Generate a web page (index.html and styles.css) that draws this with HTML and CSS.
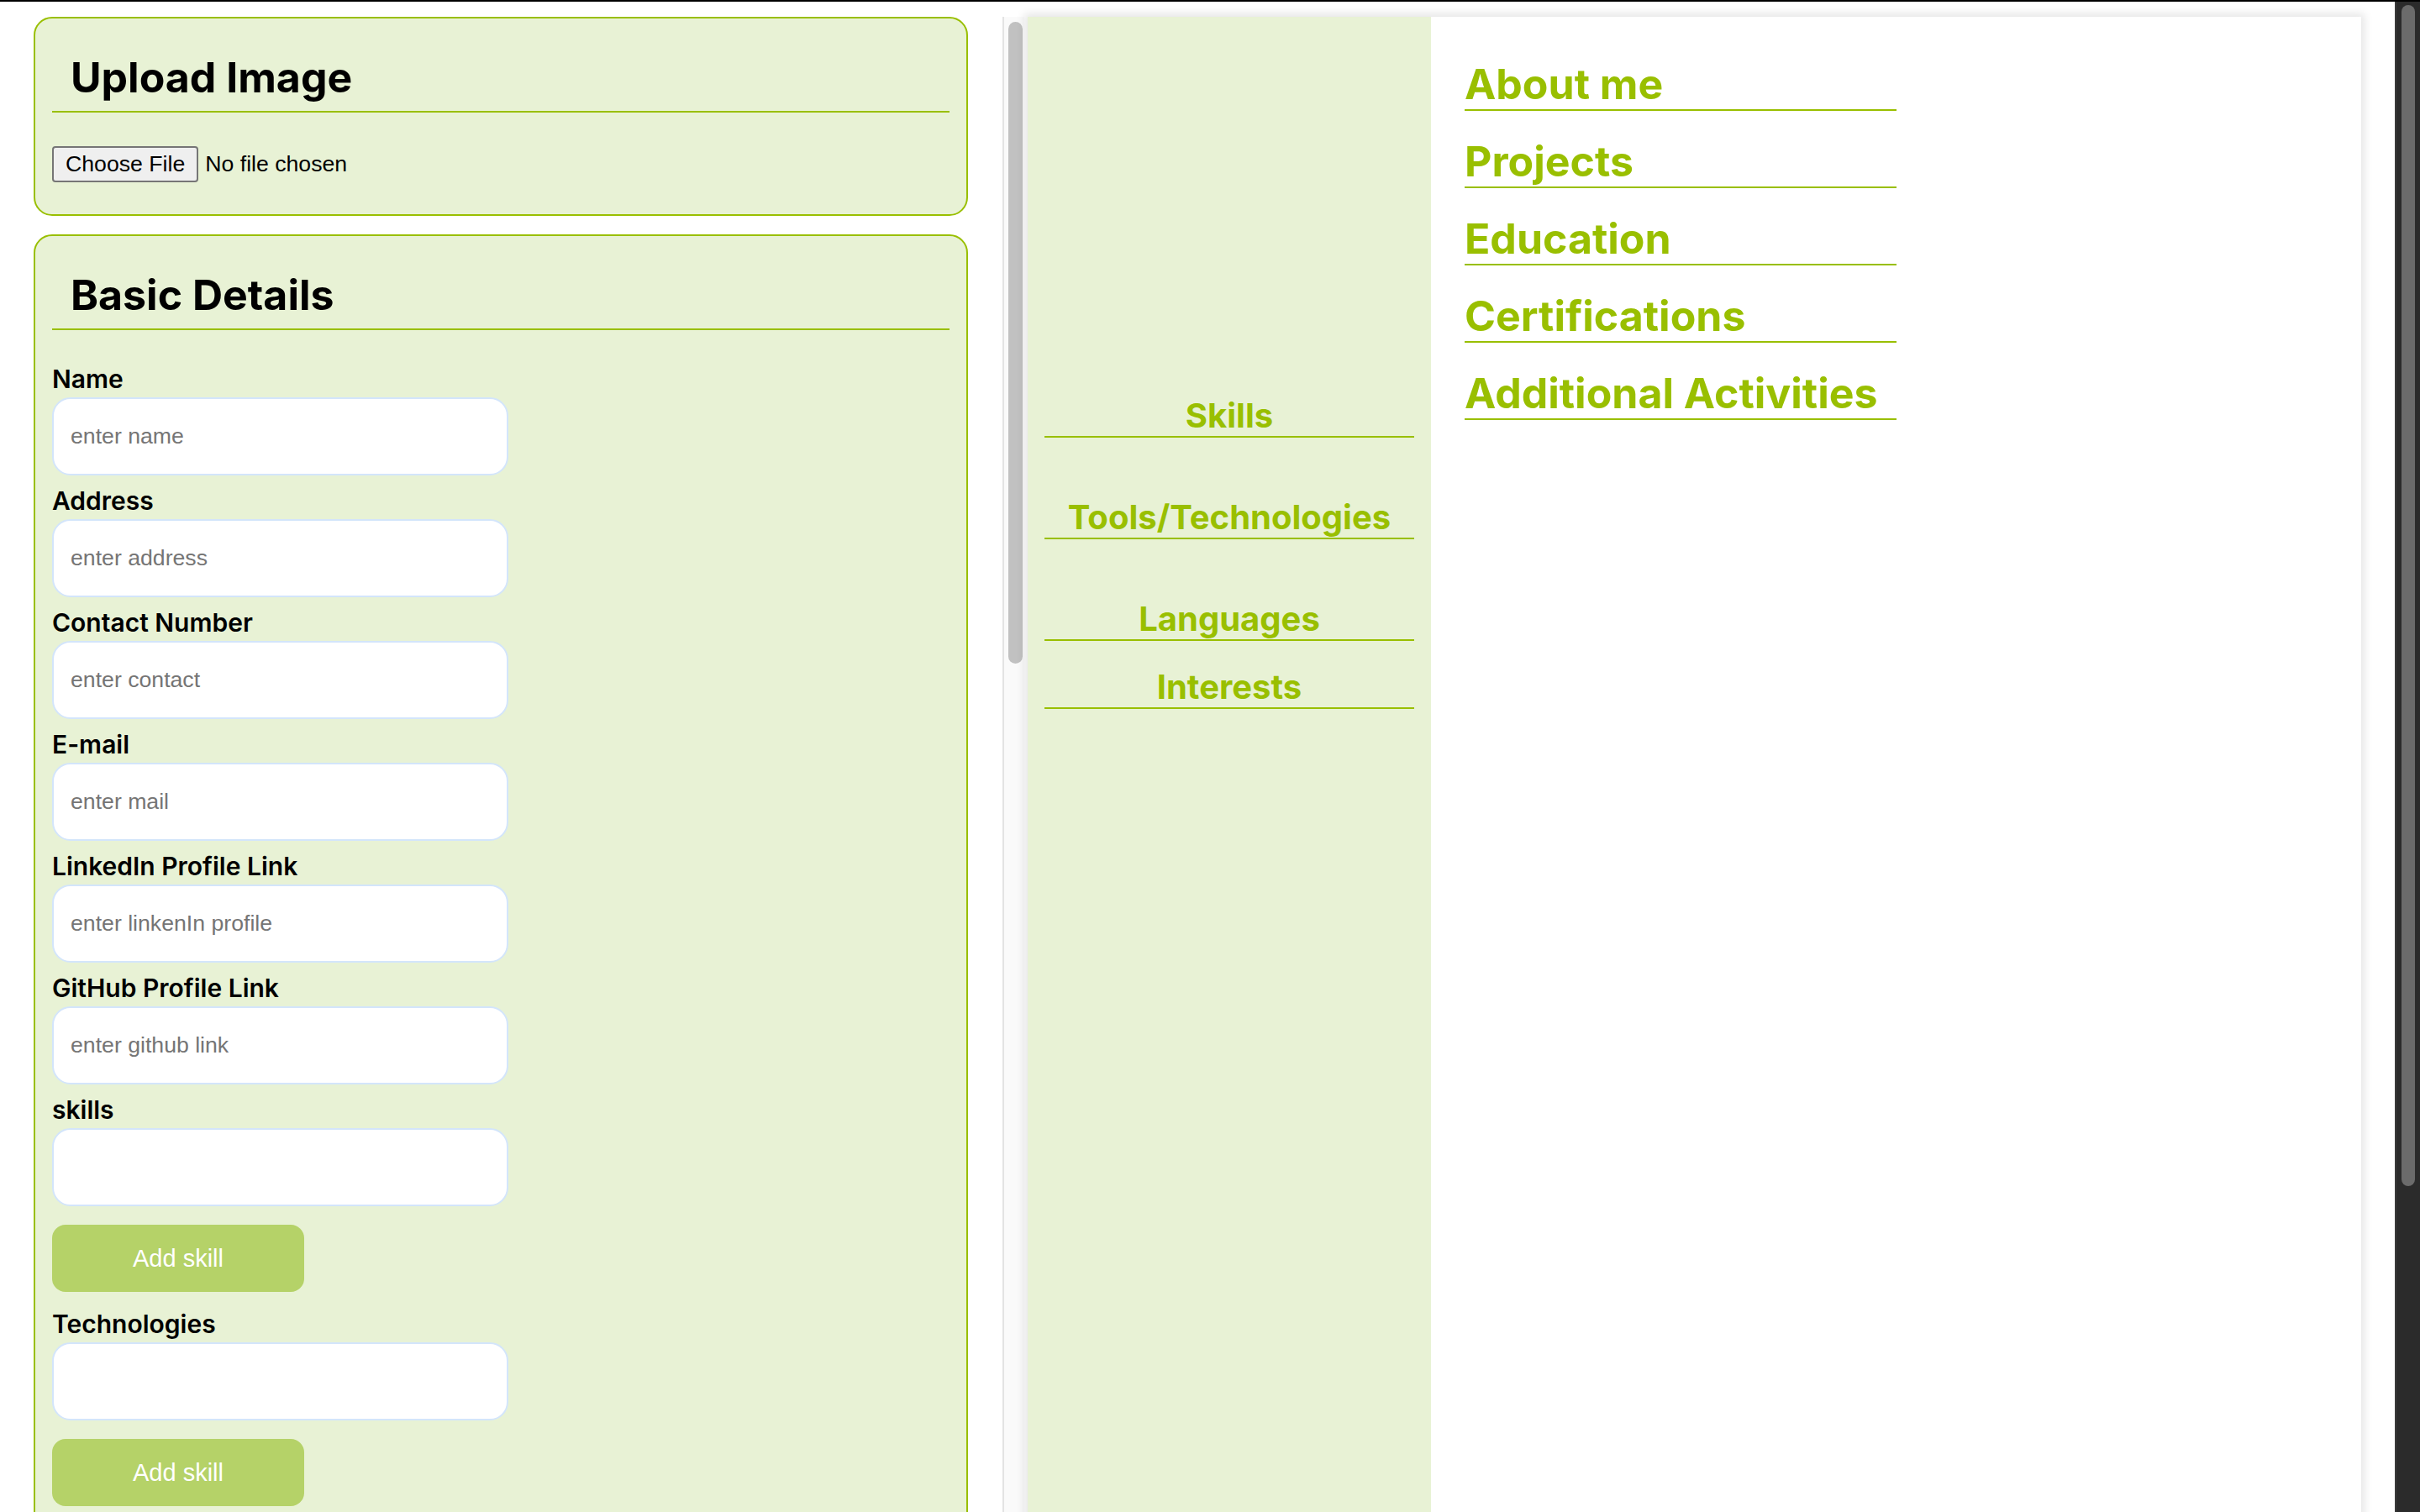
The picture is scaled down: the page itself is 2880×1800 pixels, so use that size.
FILE: index.html
```html
<!DOCTYPE html>
<html lang="en">
<head>
  <meta charset="UTF-8" />
  <meta name="viewport" content="width=device-width, initial-scale=1.0"/>
  <title>Resume Builder</title>
  <link rel="stylesheet" href="styles.css">
</head>
<body>
  <div class="page">
    <div class="form-panel">
      <div class="card">
        <h2>Upload Image</h2>
        <div class="file-row">
          <input type="file" id="imageInput" accept="image/*">
        </div>
      </div>

      <div class="card">
        <h2>Basic Details</h2>
        <label for="name">Name</label>
        <input class="field" type="text" id="name" placeholder="enter name">
        <label for="address">Address</label>
        <input class="field" type="text" id="address" placeholder="enter address">
        <label for="contact">Contact Number</label>
        <input class="field" type="text" id="contact" placeholder="enter contact">
        <label for="mail">E-mail</label>
        <input class="field" type="text" id="mail" placeholder="enter mail">
        <label for="linkedin">LinkedIn Profile Link</label>
        <input class="field" type="text" id="linkedin" placeholder="enter linkenIn profile">
        <label for="github">GitHub Profile Link</label>
        <input class="field" type="text" id="github" placeholder="enter github link">
        <label for="skillInput">skills</label>
        <input class="field" type="text" id="skillInput">
        <button class="add-btn" id="addSkillBtn">Add skill</button>
        <label for="techInput">Technologies</label>
        <input class="field" type="text" id="techInput">
        <button class="add-btn" id="addTechBtn">Add skill</button>
        <label for="langInput">Languages</label>
        <input class="field" type="text" id="langInput">
        <button class="add-btn">Add language</button>
        <label for="interestInput">Interests</label>
        <input class="field" type="text" id="interestInput">
        <button class="add-btn">Add interest</button>
      </div>

      <div class="card">
        <h2>Education</h2>
        <label for="degree">Degree</label>
        <input class="field" type="text" id="degree" placeholder="enter degree">
        <label for="college">Institute</label>
        <input class="field" type="text" id="college" placeholder="enter institute">
        <label for="year">Year</label>
        <input class="field" type="text" id="year" placeholder="enter year">
        <button class="add-btn">Add education</button>
      </div>

      <div class="card">
        <h2>Projects</h2>
        <label for="projTitle">Project Title</label>
        <input class="field" type="text" id="projTitle" placeholder="enter title">
        <label for="projDesc">Description</label>
        <input class="field" type="text" id="projDesc" placeholder="enter description">
        <button class="add-btn">Add project</button>
      </div>

      <div class="card">
        <h2>Certifications</h2>
        <label for="cert">Certificate</label>
        <input class="field" type="text" id="cert" placeholder="enter certificate">
        <button class="add-btn">Add certificate</button>
      </div>
    </div>

    <!-- panel scrollbar, drawn so it shows in screenshots -->
    <div class="panel-track" aria-hidden="true">
      <div class="panel-thumb"></div>
    </div>

    <div class="resume">
      <div class="side">
        <div class="photo" id="photoBox"></div>
        <h3>Skills</h3>
        <ul class="side-list" id="skillsList"></ul>
        <h3>Tools/Technologies</h3>
        <ul class="side-list" id="techList"></ul>
        <h3>Languages</h3>
        <h3>Interests</h3>
      </div>
      <div class="main">
        <h2>About me</h2>
        <h2>Projects</h2>
        <h2>Education</h2>
        <h2>Certifications</h2>
        <h2>Additional Activities</h2>
      </div>
    </div>
  </div>

  <div class="page-track" aria-hidden="true">
    <div class="page-thumb"></div>
  </div>

  <script>
    function addItem(inputId, listId) {
      const input = document.getElementById(inputId);
      if (!input.value.trim()) return;
      const li = document.createElement('li');
      li.textContent = input.value;
      document.getElementById(listId).appendChild(li);
      input.value = '';
    }

    document.getElementById('addSkillBtn').addEventListener('click', () => addItem('skillInput', 'skillsList'));
    document.getElementById('addTechBtn').addEventListener('click', () => addItem('techInput', 'techList'));
  </script>
</body>
</html>
```

FILE: styles.css
```css
* {
  box-sizing: border-box;
}

body {
  margin: 0;
  border-top: 2px solid #000;
  font-family: 'Inter', 'Noto Sans', sans-serif;
  background: #fff;
  color: #000;
}

.page {
  display: flex;
  align-items: flex-start;
  padding: 18px 0 20px;
}

.form-panel {
  width: 1193px;
  flex-shrink: 0;
  height: calc(100vh - 20px);
  overflow-y: auto;
  scrollbar-width: none;
  padding: 0 41px 0 40px;
}

.panel-track {
  width: 26px;
  flex-shrink: 0;
  height: calc(100vh - 20px);
  background: #fafafa;
  border-left: 2px solid #e3e3e3;
  padding: 6px 2px 0 5px;
}

.panel-thumb {
  height: 764px;
  background: #c1c1c1;
  border-radius: 9px;
}

.page-track {
  position: fixed;
  top: 2px;
  right: 0;
  width: 30px;
  height: 100vh;
  background: #2b2b2b;
  border-left: 2px solid #3a3a3a;
  padding: 4px 6px 0 6px;
}

.page-thumb {
  height: 1406px;
  background: #6b6b6b;
  border-radius: 8px;
}

.card {
  background: #e8f2d5;
  border: 2px solid #99bf00;
  border-radius: 22px;
  padding: 20px;
  margin-bottom: 22px;
}

.card h2 {
  font-size: 50px;
  font-weight: 700;
  margin: 20px 0 40px;
  padding: 0 22px 10px;
  border-bottom: 2px solid #99bf00;
}

.file-row {
  padding-bottom: 18px;
}

input[type="file"] {
  display: block;
  font-family: 'Liberation Sans', Arial, sans-serif;
  font-size: 26.67px;
  color: #000;
}

input[type="file"]::file-selector-button {
  height: 43px;
  padding: 0 14px;
  margin-right: 8px;
  font: inherit;
  color: #000;
  background: #efefef;
  border: 2px solid #767676;
  border-radius: 4px;
}

label {
  display: block;
  font-size: 30px;
  font-weight: 600;
  margin-bottom: 4px;
}

.field {
  display: block;
  width: 543px;
  height: 93px;
  margin: 0 0 12px;
  padding: 0 20px;
  font-family: 'Liberation Sans', Arial, sans-serif;
  font-size: 26.67px;
  background: #fff;
  border: 2px solid #d3e5fb;
  border-radius: 22px;
  outline: none;
}

.field::placeholder {
  color: #757575;
}

.add-btn {
  display: block;
  width: 300px;
  height: 80px;
  margin: 22px 0 20px;
  font-family: 'Liberation Sans', Arial, sans-serif;
  font-size: 29px;
  color: #fff;
  background: #b5d268;
  border: none;
  border-radius: 16px;
  cursor: pointer;
}

.resume {
  display: flex;
  width: 1587px;
  height: 2244px;
  flex-shrink: 0;
  margin-left: 4px;
  box-shadow: 0 0 10px 4px rgba(0, 0, 0, 0.1);
}

.side {
  width: 480px;
  background: #e8f2d5;
  padding: 20px;
}

.photo {
  height: 400px;
}

.side h3 {
  font-size: 40px;
  font-weight: 700;
  color: #99bf00;
  text-align: center;
  margin: 30px 0 0;
  border-bottom: 2px solid #99bf00;
}

.side-list {
  list-style: none;
  margin: 0;
  padding: 0;
  min-height: 40px;
  color: #333;
  font-size: 28px;
}

.main {
  flex: 1;
  padding: 20px 40px;
  background: #fff;
}

.main h2 {
  width: 50%;
  font-size: 50px;
  font-weight: 700;
  color: #99bf00;
  margin: 30px 0 0;
  border-bottom: 2px solid #99bf00;
}
```
